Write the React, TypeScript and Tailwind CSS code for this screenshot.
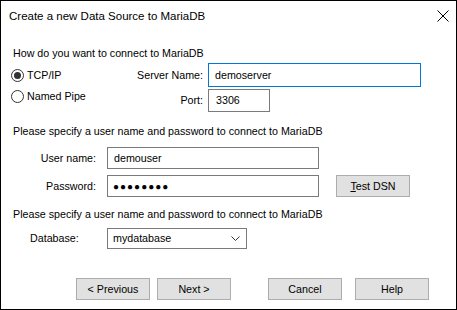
import React from "react";

const font = { fontFamily: '"Liberation Sans", Arial, sans-serif' };

const Button = ({ children }: { children: React.ReactNode }) => (
  <div className="w-[74px] h-[22px] border border-[#adadad] bg-[#e1e1e1] flex items-center justify-center">
    {children}
  </div>
);

const Radio = ({ checked, label }: { checked?: boolean; label: string }) => (
  <div className="flex items-center h-[14px] -ml-[2px]">
    <div className="w-[13px] h-[13px] rounded-full border border-[#333] flex items-center justify-center">
      {checked && <div className="w-[7px] h-[7px] rounded-full bg-[#333]" />}
    </div>
    <span className="ml-[3px]">{label}</span>
  </div>
);

export default function App() {
  return (
    <div
      style={font}
      className="w-[457px] h-[310px] border border-black bg-white text-black text-[10.7px] leading-[13px] flex flex-col"
    >
      {/* title bar */}
      <div className="h-[30px] flex items-center justify-between pl-[8px] pr-[7px] text-[11.5px]">
        <span>Create a new Data Source to MariaDB</span>
        <svg width="12" height="12" viewBox="0 0 12 12">
          <path d="M0.5 0.5 L11.5 11.5 M11.5 0.5 L0.5 11.5" stroke="#000" strokeWidth="1" />
        </svg>
      </div>

      <div className="px-[12px] flex flex-col">
        <div className="mt-[16px]">How do you want to connect to MariaDB</div>

        <div className="flex mt-[3px]">
          <div className="w-[110px] flex flex-col pt-[5px] gap-[7px]">
            <Radio checked label="TCP/IP" />
            <Radio label="Named Pipe" />
          </div>
          <div className="flex flex-col gap-[2px]">
            <div className="flex items-center">
              <span className="w-[80px] text-right">Server Name:</span>
              <div className="ml-[5px] w-[213px] h-[24px] border border-[#0078d7] flex items-center pl-[6px]">
                demoserver
              </div>
            </div>
            <div className="flex items-center">
              <span className="w-[80px] text-right">Port:</span>
              <div className="ml-[5px] w-[62px] h-[23px] border border-[#7a7a7a] flex items-center pl-[7px]">
                3306
              </div>
            </div>
          </div>
        </div>

        <div className="mt-[13px]">Please specify a user name and password to connect to MariaDB</div>

        <div className="flex items-center mt-[9px]">
          <span className="w-[83px] text-right">User name:</span>
          <div className="ml-[11px] w-[212px] h-[22px] border border-[#7a7a7a] flex items-center pl-[6px]">
            demouser
          </div>
        </div>
        <div className="flex items-center mt-[6px]">
          <span className="w-[83px] text-right">Password:</span>
          <div className="ml-[11px] w-[212px] h-[22px] border border-[#7a7a7a] flex items-center pl-[5px] text-[10px] tracking-[1px]">
            ●●●●●●●●
          </div>
          <div className="ml-[17px]">
            <Button>
              <span>
                <span className="underline">T</span>est DSN
              </span>
            </Button>
          </div>
        </div>

        <div className="mt-[11px]">Please specify a user name and password to connect to MariaDB</div>

        <div className="flex items-center mt-[7px]">
          <span className="w-[94px] pl-[17px]">Database:</span>
          <div className="w-[140px] h-[21px] border border-[#7a7a7a] flex items-center justify-between pl-[5px] pr-[6px]">
            <span>mydatabase</span>
            <svg width="9" height="6" viewBox="0 0 9 6">
              <path d="M0.5 0.5 L4.5 4.5 L8.5 0.5" stroke="#333" strokeWidth="1" fill="none" />
            </svg>
          </div>
        </div>

        <div className="flex mt-[29px] pl-[63px]">
          <Button>&lt; Previous</Button>
          <div className="ml-[7px]">
            <Button>Next &gt;</Button>
          </div>
          <div className="ml-[37px]">
            <Button>Cancel</Button>
          </div>
          <div className="ml-[13px]">
            <Button>Help</Button>
          </div>
        </div>
      </div>
    </div>
  );
}
